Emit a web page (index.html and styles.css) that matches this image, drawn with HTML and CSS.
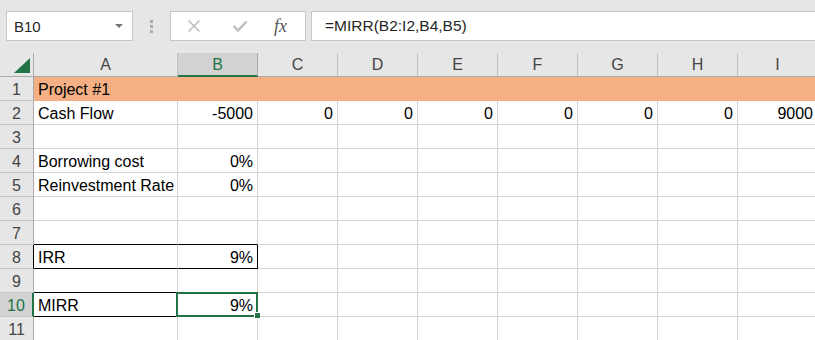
FILE: index.html
```html
<!DOCTYPE html>
<html lang="en">
<head>
  <meta charset="UTF-8" />
  <title>MIRR - Book1</title>
  <link rel="stylesheet" href="styles.css">
</head>
<body>
  <div class="toolbar">
    <div class="namebox">
      <span>B10</span>
      <span class="caret"></span>
    </div>
    <div class="grip"><i></i><i></i><i></i></div>
    <div class="fxbox">
      <svg class="ico" width="14" height="14" viewBox="0 0 14 14"><path d="M1.5 1.5 L12.5 12.5 M12.5 1.5 L1.5 12.5" stroke="#bdbdbd" stroke-width="1.6" fill="none"/></svg>
      <svg class="ico" width="16" height="12" viewBox="0 0 16 12"><path d="M1.5 6 L6 10.5 L14.5 1.5" stroke="#bdbdbd" stroke-width="2.4" fill="none"/></svg>
      <span class="fx">fx</span>
    </div>
    <div class="formula">=MIRR(B2:I2,B4,B5)</div>
  </div>

  <div class="sheet">
    <div class="row head">
      <div class="corner"><span class="tri"></span></div>
      <div class="col">A</div>
      <div class="col sel">B</div>
      <div class="col">C</div>
      <div class="col">D</div>
      <div class="col">E</div>
      <div class="col">F</div>
      <div class="col">G</div>
      <div class="col">H</div>
      <div class="col">I</div>
    </div>
    <div class="row fill">
      <div class="num">1</div>
      <div class="cell">Project #1</div>
      <div class="cell"></div><div class="cell"></div><div class="cell"></div><div class="cell"></div>
      <div class="cell"></div><div class="cell"></div><div class="cell"></div><div class="cell"></div>
    </div>
    <div class="row">
      <div class="num">2</div>
      <div class="cell">Cash Flow</div>
      <div class="cell r">-5000</div>
      <div class="cell r">0</div>
      <div class="cell r">0</div>
      <div class="cell r">0</div>
      <div class="cell r">0</div>
      <div class="cell r">0</div>
      <div class="cell r">0</div>
      <div class="cell r">9000</div>
    </div>
    <div class="row">
      <div class="num">3</div>
      <div class="cell"></div><div class="cell"></div><div class="cell"></div><div class="cell"></div><div class="cell"></div>
      <div class="cell"></div><div class="cell"></div><div class="cell"></div><div class="cell"></div>
    </div>
    <div class="row">
      <div class="num">4</div>
      <div class="cell">Borrowing cost</div>
      <div class="cell r">0%</div>
      <div class="cell"></div><div class="cell"></div><div class="cell"></div>
      <div class="cell"></div><div class="cell"></div><div class="cell"></div><div class="cell"></div>
    </div>
    <div class="row">
      <div class="num">5</div>
      <div class="cell">Reinvestment Rate</div>
      <div class="cell r">0%</div>
      <div class="cell"></div><div class="cell"></div><div class="cell"></div>
      <div class="cell"></div><div class="cell"></div><div class="cell"></div><div class="cell"></div>
    </div>
    <div class="row">
      <div class="num">6</div>
      <div class="cell"></div><div class="cell"></div><div class="cell"></div><div class="cell"></div><div class="cell"></div>
      <div class="cell"></div><div class="cell"></div><div class="cell"></div><div class="cell"></div>
    </div>
    <div class="row">
      <div class="num">7</div>
      <div class="cell edge-b"></div><div class="cell edge-b"></div><div class="cell"></div><div class="cell"></div><div class="cell"></div>
      <div class="cell"></div><div class="cell"></div><div class="cell"></div><div class="cell"></div>
    </div>
    <div class="row">
      <div class="num edge-r">8</div>
      <div class="cell edge-b">IRR</div>
      <div class="cell r edge-b edge-r">9%</div>
      <div class="cell"></div><div class="cell"></div><div class="cell"></div>
      <div class="cell"></div><div class="cell"></div><div class="cell"></div><div class="cell"></div>
    </div>
    <div class="row">
      <div class="num">9</div>
      <div class="cell edge-b"></div><div class="cell edge-b"></div><div class="cell"></div><div class="cell"></div><div class="cell"></div>
      <div class="cell"></div><div class="cell"></div><div class="cell"></div><div class="cell"></div>
    </div>
    <div class="row">
      <div class="num active">10</div>
      <div class="cell edge-b">MIRR</div>
      <div class="cell r edge-b current">9%<span class="handle"></span></div>
      <div class="cell"></div><div class="cell"></div><div class="cell"></div>
      <div class="cell"></div><div class="cell"></div><div class="cell"></div><div class="cell"></div>
    </div>
    <div class="row">
      <div class="num">11</div>
      <div class="cell"></div><div class="cell"></div><div class="cell"></div><div class="cell"></div><div class="cell"></div>
      <div class="cell"></div><div class="cell"></div><div class="cell"></div><div class="cell"></div>
    </div>
  </div>
</body>
</html>
```

FILE: styles.css
```css
body {
  margin: 0;
  font-family: "Liberation Sans", Arial, sans-serif;
  background-color: #ffffff;
  width: 815px;
  height: 340px;
  overflow: hidden;
}
.toolbar {
  height: 53px;
  box-sizing: border-box;
  background-color: #e6e6e6;
  padding: 11px 0 0 6px;
  display: flex;
  align-items: flex-start;
}
.namebox {
  width: 127px;
  height: 30px;
  box-sizing: border-box;
  background-color: #fff;
  border: 1px solid #c6c6c6;
  display: flex;
  align-items: center;
  justify-content: space-between;
  padding: 0 9px 0 7px;
  font-size: 15px;
  color: #262626;
}
.caret {
  width: 0;
  height: 0;
  border-left: 4px solid transparent;
  border-right: 4px solid transparent;
  border-top: 4px solid #777;
}
.grip {
  width: 37px;
  height: 30px;
  display: flex;
  flex-direction: column;
  align-items: center;
  justify-content: center;
  gap: 2px;
}
.grip i {
  display: block;
  width: 3px;
  height: 3px;
  background-color: #acacac;
}
.fxbox {
  width: 136px;
  height: 30px;
  box-sizing: border-box;
  background-color: #fff;
  border: 1px solid #c6c6c6;
  display: flex;
  align-items: center;
  padding-left: 16px;
  gap: 31px;
}
.ico {
  display: block;
}
.fx {
  font-family: "Liberation Serif", serif;
  font-style: italic;
  font-size: 18px;
  color: #555;
  margin-left: -5px;
}
.formula {
  flex: 1;
  height: 30px;
  box-sizing: border-box;
  margin-left: 5px;
  margin-right: -10px;
  background-color: #fff;
  border: 1px solid #c6c6c6;
  padding-left: 13px;
  font-size: 15.5px;
  line-height: 28px;
  color: #262626;
}
.sheet {
  width: 818px;
}
.row {
  display: grid;
  grid-template-columns: 34px 144px repeat(8, 80px);
  height: 24px;
}
.row > div {
  box-sizing: border-box;
  height: 24px;
}
.corner {
  background-color: #e6e6e6;
  border-right: 1px solid #ababab;
  border-bottom: 1px solid #ababab;
  position: relative;
}
.tri {
  position: absolute;
  right: 3px;
  bottom: 3px;
  width: 0;
  height: 0;
  border-left: 16px solid transparent;
  border-bottom: 15px solid #217346;
}
.col {
  background-color: #e6e6e6;
  border-right: 1px solid #c0c0c0;
  border-bottom: 1px solid #ababab;
  text-align: center;
  font-size: 16px;
  line-height: 23px;
  color: #444;
}
.col.sel {
  background-color: #d2d2d2;
  border-right-color: #ababab;
  border-bottom: 2px solid #217346;
  color: #217346;
}
.num {
  background-color: #e6e6e6;
  border-right: 1px solid #ababab;
  border-bottom: 1px solid #c8c8c8;
  text-align: center;
  font-size: 16px;
  padding-top: 3px;
  line-height: 20px;
  color: #444;
}
.num.active {
  background-color: #d2d2d2;
  border-right: 2px solid #217346;
  color: #217346;
}
.cell {
  border-right: 1px solid #d4d4d4;
  border-bottom: 1px solid #d4d4d4;
  font-size: 16px;
  padding: 3px 4px 0 4px;
  line-height: 20px;
  color: #000;
  white-space: nowrap;
  overflow: visible;
}
.cell.r {
  text-align: right;
  padding-right: 4px;
}
.fill .cell {
  background-color: #f4b084;
  border-color: #f4b084;
}
.edge-b {
  border-bottom-color: #000 !important;
}
.edge-r {
  border-right-color: #000 !important;
}
.current {
  position: relative;
}
.current::before {
  content: "";
  position: absolute;
  left: -2px;
  top: -1px;
  right: -1px;
  bottom: -1px;
  border: 2px solid #217346;
}
.handle {
  position: absolute;
  right: -3px;
  bottom: -2px;
  width: 5px;
  height: 5px;
  background-color: #217346;
  border: 1px solid #fff;
  border-right: none;
  border-bottom: none;
}
```
